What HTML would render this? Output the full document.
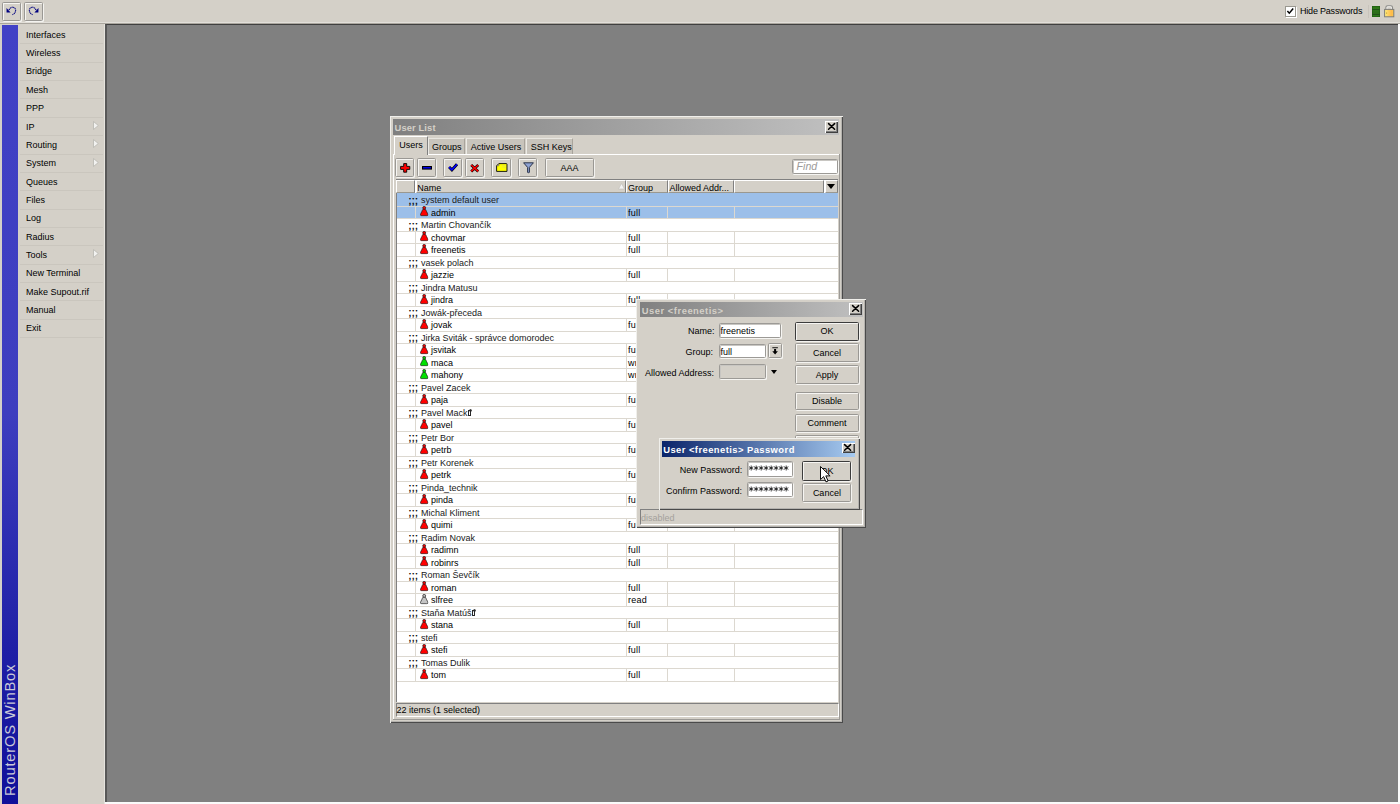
<!DOCTYPE html><html><head><meta charset="utf-8"><style>
*{margin:0;padding:0;box-sizing:border-box}
html,body{width:1400px;height:804px;overflow:hidden;background:#d4d0c8;font-family:"Liberation Sans",sans-serif;font-size:9px;color:#000}
.a{position:absolute}
.t{position:absolute;white-space:pre;line-height:1}
.btn{position:absolute;border:1px solid #9a9894;border-radius:1.5px;box-shadow:inset 1px 1px 0 #f6f5f2,1px 1px 0 #f4f3f0;background:#d4d0c8}
.bdef{border-color:#3c3c3c}
.cb{position:absolute;background:#d4d0c8;box-shadow:inset 1px 1px 0 #fff,inset -1px -1px 0 #404040,inset -2px -2px 0 #808080}
.inp{position:absolute;background:#fff;border:1px solid #9c9a96;border-radius:1.5px;box-shadow:1px 1px 0 #f6f5f2,inset 1px 1px 0 #c8c6c2}
.arr{position:absolute;width:0;height:0;border-left:5px solid #f4f4f4;border-top:4.5px solid transparent;border-bottom:4.5px solid transparent}
.win{position:absolute;background:#d4d0c8;box-shadow:inset 1px 1px 0 #f0efeb,inset -1px -1px 0 #4a4a4a,inset -2px -2px 0 #b4b2ae}
svg{position:absolute;overflow:visible}
.tofu{display:inline-block;width:3.2px;height:5.4px;border:0.9px solid #282828;margin-left:0.6px;vertical-align:0px;position:relative}.tofu:before{content:'';position:absolute;left:0px;top:-2.6px;width:1.3px;height:1.3px;border:0.7px solid #282828;border-radius:50%}
</style></head><body>
<div class="a" style="left:0;top:22px;width:1400px;height:1px;background:#e2dfd9"></div>
<div class="a" style="left:0;top:23px;width:1400px;height:1px;background:#aaa69e"></div>
<div class="btn" style="left:2px;top:2px;width:19px;height:19px"></div>
<div class="btn" style="left:23.5px;top:2px;width:19px;height:19px"></div>
<svg style="left:2px;top:2px" width="19" height="19" viewBox="0 0 19 19"><path d="M4.5 6.1L4.6 10.6L8.6 10.6Z" fill="#000080"/><path d="M6.9 7.9C8.2 5.9 9.8 5.1 11 5.2C12.6 5.4 13.7 6.8 13.6 8.8C13.5 10.4 12.2 11.9 10.4 12.6" fill="none" stroke="#000080" stroke-width="1.15" stroke-dasharray="1.2 0.55"/></svg>
<svg style="left:23.5px;top:2px" width="19" height="19" viewBox="0 0 19 19"><path d="M14.5 6.1L14.4 10.6L10.4 10.6Z" fill="#000080"/><path d="M12.1 7.9C10.8 5.9 9.2 5.1 8 5.2C6.4 5.4 5.3 6.8 5.4 8.8C5.5 10.4 6.8 11.9 8.6 12.6" fill="none" stroke="#000080" stroke-width="1.15" stroke-dasharray="1.2 0.55"/></svg>
<div class="a" style="left:2px;top:25px;width:16px;height:779px;background:linear-gradient(#4141c6 0%,#3d3dbf 50%,#1f1fa6 80%,#10109a 100%)"></div>
<div class="t" style="left:3.3px;top:795.5px;transform-origin:0 0;transform:rotate(-90deg);font-size:14.8px;letter-spacing:0.75px;color:#c8c8d8">RouterOS WinBox</div>
<div class="a" style="left:104px;top:24px;width:1px;height:780px;background:#e6e4de"></div>
<div class="t" style="left:26px;top:30.70px">Interfaces</div>
<div class="a" style="left:20px;top:43.36px;width:83px;height:1px;background:#cac6be"></div>
<div class="t" style="left:26px;top:49.06px">Wireless</div>
<div class="a" style="left:20px;top:61.72px;width:83px;height:1px;background:#cac6be"></div>
<div class="t" style="left:26px;top:67.42px">Bridge</div>
<div class="a" style="left:20px;top:80.08px;width:83px;height:1px;background:#cac6be"></div>
<div class="t" style="left:26px;top:85.78px">Mesh</div>
<div class="a" style="left:20px;top:98.44px;width:83px;height:1px;background:#cac6be"></div>
<div class="t" style="left:26px;top:104.14px">PPP</div>
<div class="a" style="left:20px;top:116.80px;width:83px;height:1px;background:#cac6be"></div>
<div class="t" style="left:26px;top:122.50px">IP</div>
<div class="a" style="left:20px;top:135.16px;width:83px;height:1px;background:#cac6be"></div>
<svg style="left:92.8px;top:120.89999999999999px" width="6" height="9" viewBox="0 0 6 9"><path d="M0.5 0.5L5.3 4.5L0.5 8.5Z" fill="#f2f2f0" stroke="#b8b6b0" stroke-width="0.8"/></svg>
<div class="t" style="left:26px;top:140.86px">Routing</div>
<div class="a" style="left:20px;top:153.52px;width:83px;height:1px;background:#cac6be"></div>
<svg style="left:92.8px;top:139.26px" width="6" height="9" viewBox="0 0 6 9"><path d="M0.5 0.5L5.3 4.5L0.5 8.5Z" fill="#f2f2f0" stroke="#b8b6b0" stroke-width="0.8"/></svg>
<div class="t" style="left:26px;top:159.22px">System</div>
<div class="a" style="left:20px;top:171.88px;width:83px;height:1px;background:#cac6be"></div>
<svg style="left:92.8px;top:157.61999999999998px" width="6" height="9" viewBox="0 0 6 9"><path d="M0.5 0.5L5.3 4.5L0.5 8.5Z" fill="#f2f2f0" stroke="#b8b6b0" stroke-width="0.8"/></svg>
<div class="t" style="left:26px;top:177.58px">Queues</div>
<div class="a" style="left:20px;top:190.24px;width:83px;height:1px;background:#cac6be"></div>
<div class="t" style="left:26px;top:195.94px">Files</div>
<div class="a" style="left:20px;top:208.60px;width:83px;height:1px;background:#cac6be"></div>
<div class="t" style="left:26px;top:214.30px">Log</div>
<div class="a" style="left:20px;top:226.96px;width:83px;height:1px;background:#cac6be"></div>
<div class="t" style="left:26px;top:232.66px">Radius</div>
<div class="a" style="left:20px;top:245.32px;width:83px;height:1px;background:#cac6be"></div>
<div class="t" style="left:26px;top:251.02px">Tools</div>
<div class="a" style="left:20px;top:263.68px;width:83px;height:1px;background:#cac6be"></div>
<svg style="left:92.8px;top:249.42px" width="6" height="9" viewBox="0 0 6 9"><path d="M0.5 0.5L5.3 4.5L0.5 8.5Z" fill="#f2f2f0" stroke="#b8b6b0" stroke-width="0.8"/></svg>
<div class="t" style="left:26px;top:269.38px">New Terminal</div>
<div class="a" style="left:20px;top:282.04px;width:83px;height:1px;background:#cac6be"></div>
<div class="t" style="left:26px;top:287.74px">Make Supout.rif</div>
<div class="a" style="left:20px;top:300.40px;width:83px;height:1px;background:#cac6be"></div>
<div class="t" style="left:26px;top:306.10px">Manual</div>
<div class="a" style="left:20px;top:318.76px;width:83px;height:1px;background:#cac6be"></div>
<div class="t" style="left:26px;top:324.46px">Exit</div>
<div class="a" style="left:20px;top:337.12px;width:83px;height:1px;background:#cac6be"></div>
<div class="a" style="left:105px;top:24px;width:1293px;height:778px;background:#808080;border-top:1px solid #404040;border-left:2px solid #585858"></div>
<div class="a" style="left:105px;top:802px;width:1295px;height:2px;background:#fafafa"></div>
<div class="a" style="left:1398px;top:24px;width:2px;height:780px;background:#fafafa"></div>
<div class="a" style="left:1285px;top:6px;width:10.5px;height:10.5px;background:#fff;border:1px solid #9a9890;box-shadow:1px 1px 0 #fff"></div>
<svg style="left:1285px;top:6px" width="10.5" height="10.5" viewBox="0 0 10.5 10.5"><path d="M2.4 5L4.3 7.2L8.2 2.6" fill="none" stroke="#000" stroke-width="1.5"/></svg>
<div class="t" style="left:1300px;top:7.4px;letter-spacing:-0.2px">Hide Passwords</div>
<div class="a" style="left:1368px;top:5px;width:1px;height:13px;background:#c8c4bc"></div>
<div class="a" style="left:1371.5px;top:6.1px;width:8.6px;height:10.8px;background:linear-gradient(#2c7016 0,#2f7a18 2.8px,#22501a 2.8px,#22501a 3.9px,#2e7418 3.9px,#2c6c18 7.9px,#22501a 7.9px,#22501a 9px,#2e7818 9px);box-shadow:inset 0 0 0 0.6px #1d5a10"></div>
<svg style="left:1384px;top:4.8px" width="10.4" height="12.4" viewBox="0 0 10.4 12.4"><path d="M1.9 4.6V2.3Q1.9 0.7 3.5 0.7H6.9Q8.5 0.7 8.5 2.3V4.6" fill="none" stroke="#8c8c8a" stroke-width="1.1"/><path d="M3 4.4V2.6Q3 1.8 3.8 1.8H6.6Q7.4 1.8 7.4 2.6V4.4" fill="none" stroke="#f4f4f2" stroke-width="0.8"/><rect x="0.6" y="4.4" width="9.2" height="7.4" fill="url(#lockg)" stroke="#7c7c7a" stroke-width="1"/><circle cx="2.6" cy="8" r="0.6" fill="#b09020"/><defs><linearGradient id="lockg"><stop offset="0" stop-color="#fff080"/><stop offset="0.4" stop-color="#ffd060"/><stop offset="0.8" stop-color="#ffb848"/><stop offset="1" stop-color="#ffd850"/></linearGradient></defs></svg>
<div class="win" style="left:390px;top:116px;width:452.5px;height:606.5px"></div>
<div class="a" style="left:393.3px;top:119px;width:446.2px;height:15.7px;background:linear-gradient(90deg,#808080,#c0c0c0)"></div>
<div class="t" style="left:394.6px;top:122.8px;font-weight:bold;font-size:9.4px;letter-spacing:0.1px;color:#d4d0c8">User List</div>
<div class="cb" style="left:825px;top:121px;width:13px;height:11.5px"></div>
<svg style="left:827.5px;top:123.05px" width="7.2" height="6.8" viewBox="0 0 7.2 6.8"><path d="M0.6 0.6L6.6 6.2M6.6 0.6L0.6 6.2" stroke="#000" stroke-width="1.55" stroke-linecap="round"/></svg>
<div class="a" style="left:839.3px;top:154px;width:1px;height:566px;background:#9c9a96"></div>
<div class="a" style="left:393px;top:719.2px;width:447px;height:1px;background:#9c9a96"></div>
<div class="a" style="left:393px;top:154px;width:1px;height:565px;background:#fff"></div>
<div class="a" style="left:393px;top:153.5px;width:446px;height:1px;background:#fff"></div>
<div class="a" style="left:393.6px;top:136px;width:34.69999999999999px;height:18.5px;background:#d4d0c8;border-top:1px solid #fff;border-left:1px solid #fff;border-right:1px solid #808080"></div>
<div class="t" style="left:399.3px;top:141px">Users</div>
<div class="a" style="left:428.3px;top:137.7px;width:37.099999999999966px;height:16px;background:#c8c4bc;border-top:1px solid #e8e6e0;border-left:1px solid #ecebe6;border-right:1px solid #a8a49c"></div>
<div class="t" style="left:432px;top:142.5px">Groups</div>
<div class="a" style="left:466.4px;top:137.7px;width:59.0px;height:16px;background:#c8c4bc;border-top:1px solid #e8e6e0;border-left:1px solid #ecebe6;border-right:1px solid #a8a49c"></div>
<div class="t" style="left:470.7px;top:142.5px">Active Users</div>
<div class="a" style="left:526.4px;top:137.7px;width:46.5px;height:16px;background:#c8c4bc;border-top:1px solid #e8e6e0;border-left:1px solid #ecebe6;border-right:1px solid #a8a49c"></div>
<div class="t" style="left:530.7px;top:142.5px">SSH Keys</div>
<div class="btn" style="left:395.4px;top:157.7px;width:18.2px;height:19px"></div>
<div class="btn" style="left:416.9px;top:157.7px;width:18.8px;height:19px"></div>
<div class="btn" style="left:443.1px;top:157.7px;width:19.0px;height:19px"></div>
<div class="btn" style="left:465px;top:157.7px;width:18.9px;height:19px"></div>
<div class="btn" style="left:491.4px;top:157.7px;width:19.3px;height:19px"></div>
<div class="btn" style="left:518.3px;top:157.7px;width:18.8px;height:19px"></div>
<div class="btn" style="left:545px;top:157.7px;width:49.0px;height:19px"></div>
<svg style="left:399.8px;top:162.5px" width="10.4" height="9.8" viewBox="0 0 10.4 9.8"><path d="M3.7 0.6H6.7V3.4H9.8V6.4H6.7V9.2H3.7V6.4H0.6V3.4H3.7Z" fill="#ff0000" stroke="#000" stroke-width="0.9" stroke-linejoin="miter"/></svg>
<svg style="left:421.8px;top:165.5px" width="10" height="3.6" viewBox="0 0 10 3.6"><rect x="0.55" y="0.55" width="8.9" height="2.5" fill="#0000ff" stroke="#000" stroke-width="1.1"/></svg>
<svg style="left:448.3px;top:163.4px" width="10" height="8.4" viewBox="0 0 10 8.4"><path d="M1.1 4.1L3.9 6.9L9.0 1.2" fill="none" stroke="#000" stroke-width="2.9" stroke-linejoin="miter"/><path d="M1.1 4.1L3.9 6.9L9.0 1.2" fill="none" stroke="#0000ff" stroke-width="1.6" stroke-linejoin="miter"/></svg>
<svg style="left:469.8px;top:163.9px" width="9.4" height="8.4" viewBox="0 0 9.4 8.4"><path d="M1.2 1.0L8.2 7.4M8.2 1.0L1.2 7.4" stroke="#000" stroke-width="2.7"/><path d="M1.2 1.0L8.2 7.4M8.2 1.0L1.2 7.4" stroke="#ff0000" stroke-width="1.5"/></svg>
<svg style="left:495.5px;top:162.7px" width="11.6" height="9" viewBox="0 0 11.6 9"><path d="M2.8 0.6H10.4Q11 0.6 11 1.2V8.4H0.6V2.8Z" fill="#ffff00" stroke="#101010" stroke-width="0.95" stroke-linejoin="round"/><path d="M0.9 2.8H2.8V0.9Z" fill="#e8e8d0" stroke="#404040" stroke-width="0.5"/><path d="M6.2 2.6H9.6M6.2 4.2H9.6" stroke="#d8d860" stroke-width="0.6"/></svg>
<svg style="left:522.7px;top:162px" width="11" height="11.4" viewBox="0 0 11 11.4"><path d="M0.6 0.8H10.4L6.4 5.4V10.4Q5.5 11 4.6 10.4V5.4Z" fill="#8ea2d2" stroke="#2a3248" stroke-width="1" stroke-linejoin="round"/></svg>
<div class="t" style="left:560.5px;top:163.8px">AAA</div>
<div class="inp" style="left:791.8px;top:159.3px;width:46px;height:14.5px"></div>
<div class="t" style="left:796.6px;top:161px;font-style:italic;color:#9c9a98;font-size:10.6px">Find</div>
<div class="a" style="left:395.5px;top:179.4px;width:442.7px;height:522.4px;background:#fff;border-top:1px solid #808080;border-left:1px solid #808080"></div>
<div class="a" style="left:395.9px;top:180.2px;width:19.6px;height:13.2px;background:#d4d0c8;border-top:1px solid #fff;border-left:1px solid #fff;border-right:1px solid #808080;border-bottom:1px solid #9a9890"></div>
<div class="a" style="left:415.5px;top:180.2px;width:210.7px;height:13.2px;background:#d4d0c8;border-top:1px solid #fff;border-left:1px solid #fff;border-right:1px solid #808080;border-bottom:1px solid #9a9890"></div>
<div class="t" style="left:417.3px;top:184.1px">Name</div>
<div class="a" style="left:626.2px;top:180.2px;width:41.4px;height:13.2px;background:#d4d0c8;border-top:1px solid #fff;border-left:1px solid #fff;border-right:1px solid #808080;border-bottom:1px solid #9a9890"></div>
<div class="t" style="left:628.0px;top:184.1px">Group</div>
<div class="a" style="left:667.6px;top:180.2px;width:66.8px;height:13.2px;background:#d4d0c8;border-top:1px solid #fff;border-left:1px solid #fff;border-right:1px solid #808080;border-bottom:1px solid #9a9890"></div>
<div class="t" style="left:669.4px;top:184.1px">Allowed Addr...</div>
<div class="a" style="left:734.4px;top:180.2px;width:90.1px;height:13.2px;background:#d4d0c8;border-top:1px solid #fff;border-left:1px solid #fff;border-right:1px solid #808080;border-bottom:1px solid #9a9890"></div>
<div class="a" style="left:824.5px;top:180.2px;width:13.7px;height:13.2px;background:#d4d0c8;border-top:1px solid #fff;border-left:1px solid #fff;border-right:1px solid #808080;border-bottom:1px solid #9a9890"></div>
<svg style="left:617.5px;top:182.5px" width="7" height="6.5" viewBox="0 0 7 6.5"><path d="M3.5 0.5L6.5 6H0.5Z" fill="#f4f4f4" stroke="#c0beb8" stroke-width="0.6"/></svg>
<div class="a" style="left:826.8px;top:184.3px;width:0;height:0;border-left:4.5px solid transparent;border-right:4.5px solid transparent;border-top:5px solid #000"></div>
<svg width="0" height="0" style="position:absolute"><defs><symbol id="usr" viewBox="0 0 8.4 10.4"><path d="M4.2 2.7C2.9 2.7 2.4 4.2 1.8 5.6C1.2 7.1 0.45 7.7 0.45 8.7Q0.45 9.75 1.7 9.75H6.7Q7.95 9.75 7.95 8.7C7.95 7.7 7.2 7.1 6.6 5.6C6.0 4.2 5.5 2.7 4.2 2.7Z" fill="currentColor" stroke="#181818" stroke-width="0.7"/><circle cx="4.2" cy="1.85" r="1.45" fill="currentColor" stroke="#181818" stroke-width="0.7"/></symbol></defs></svg>
<div class="a" style="left:396.5px;top:193.40px;width:441.7px;height:12.5px;background:#9cbfe9"></div>
<div class="a" style="left:396.5px;top:205.90px;width:441.7px;height:12.5px;background:#9cbfe9"></div>
<div class="a" style="left:396.5px;top:205.75px;width:441.7px;height:1px;background:#dcd8d0"></div>
<div class="t" style="left:408.6px;top:195.90px;color:#000;letter-spacing:0.3px;font-size:10.4px;font-weight:normal;-webkit-text-stroke:0.25px #000">;;;</div>
<div class="t" style="left:421px;top:196.20px;color:#202020">system default user</div>
<div class="a" style="left:396.5px;top:218.25px;width:441.7px;height:1px;background:#dcd8d0"></div>
<div class="a" style="left:415.0px;top:205.90px;width:1px;height:12.5px;background:#dcd8d0"></div>
<div class="a" style="left:625.7px;top:205.90px;width:1px;height:12.5px;background:#dcd8d0"></div>
<div class="a" style="left:667.1px;top:205.90px;width:1px;height:12.5px;background:#dcd8d0"></div>
<div class="a" style="left:733.9px;top:205.90px;width:1px;height:12.5px;background:#dcd8d0"></div>
<svg style="left:420px;top:206.00px;color:#ff0000" width="8.4" height="10.4"><use href="#usr"/></svg>
<div class="t" style="left:431px;top:208.70px">admin</div>
<div class="t" style="left:627.9px;top:208.70px;letter-spacing:0.3px">full</div>
<div class="a" style="left:396.5px;top:230.75px;width:441.7px;height:1px;background:#dcd8d0"></div>
<div class="t" style="left:408.6px;top:220.90px;color:#000;letter-spacing:0.3px;font-size:10.4px;font-weight:normal;-webkit-text-stroke:0.25px #000">;;;</div>
<div class="t" style="left:421px;top:221.20px;color:#202020">Martin Chovančík</div>
<div class="a" style="left:396.5px;top:243.25px;width:441.7px;height:1px;background:#dcd8d0"></div>
<div class="a" style="left:415.0px;top:230.90px;width:1px;height:12.5px;background:#dcd8d0"></div>
<div class="a" style="left:625.7px;top:230.90px;width:1px;height:12.5px;background:#dcd8d0"></div>
<div class="a" style="left:667.1px;top:230.90px;width:1px;height:12.5px;background:#dcd8d0"></div>
<div class="a" style="left:733.9px;top:230.90px;width:1px;height:12.5px;background:#dcd8d0"></div>
<svg style="left:420px;top:231.00px;color:#ff0000" width="8.4" height="10.4"><use href="#usr"/></svg>
<div class="t" style="left:431px;top:233.70px">chovmar</div>
<div class="t" style="left:627.9px;top:233.70px;letter-spacing:0.3px">full</div>
<div class="a" style="left:396.5px;top:255.75px;width:441.7px;height:1px;background:#dcd8d0"></div>
<div class="a" style="left:415.0px;top:243.40px;width:1px;height:12.5px;background:#dcd8d0"></div>
<div class="a" style="left:625.7px;top:243.40px;width:1px;height:12.5px;background:#dcd8d0"></div>
<div class="a" style="left:667.1px;top:243.40px;width:1px;height:12.5px;background:#dcd8d0"></div>
<div class="a" style="left:733.9px;top:243.40px;width:1px;height:12.5px;background:#dcd8d0"></div>
<svg style="left:420px;top:243.50px;color:#ff0000" width="8.4" height="10.4"><use href="#usr"/></svg>
<div class="t" style="left:431px;top:246.20px">freenetis</div>
<div class="t" style="left:627.9px;top:246.20px;letter-spacing:0.3px">full</div>
<div class="a" style="left:396.5px;top:268.25px;width:441.7px;height:1px;background:#dcd8d0"></div>
<div class="t" style="left:408.6px;top:258.40px;color:#000;letter-spacing:0.3px;font-size:10.4px;font-weight:normal;-webkit-text-stroke:0.25px #000">;;;</div>
<div class="t" style="left:421px;top:258.70px;color:#202020">vasek polach</div>
<div class="a" style="left:396.5px;top:280.75px;width:441.7px;height:1px;background:#dcd8d0"></div>
<div class="a" style="left:415.0px;top:268.40px;width:1px;height:12.5px;background:#dcd8d0"></div>
<div class="a" style="left:625.7px;top:268.40px;width:1px;height:12.5px;background:#dcd8d0"></div>
<div class="a" style="left:667.1px;top:268.40px;width:1px;height:12.5px;background:#dcd8d0"></div>
<div class="a" style="left:733.9px;top:268.40px;width:1px;height:12.5px;background:#dcd8d0"></div>
<svg style="left:420px;top:268.50px;color:#ff0000" width="8.4" height="10.4"><use href="#usr"/></svg>
<div class="t" style="left:431px;top:271.20px">jazzie</div>
<div class="t" style="left:627.9px;top:271.20px;letter-spacing:0.3px">full</div>
<div class="a" style="left:396.5px;top:293.25px;width:441.7px;height:1px;background:#dcd8d0"></div>
<div class="t" style="left:408.6px;top:283.40px;color:#000;letter-spacing:0.3px;font-size:10.4px;font-weight:normal;-webkit-text-stroke:0.25px #000">;;;</div>
<div class="t" style="left:421px;top:283.70px;color:#202020">Jindra Matusu</div>
<div class="a" style="left:396.5px;top:305.75px;width:441.7px;height:1px;background:#dcd8d0"></div>
<div class="a" style="left:415.0px;top:293.40px;width:1px;height:12.5px;background:#dcd8d0"></div>
<div class="a" style="left:625.7px;top:293.40px;width:1px;height:12.5px;background:#dcd8d0"></div>
<div class="a" style="left:667.1px;top:293.40px;width:1px;height:12.5px;background:#dcd8d0"></div>
<div class="a" style="left:733.9px;top:293.40px;width:1px;height:12.5px;background:#dcd8d0"></div>
<svg style="left:420px;top:293.50px;color:#ff0000" width="8.4" height="10.4"><use href="#usr"/></svg>
<div class="t" style="left:431px;top:296.20px">jindra</div>
<div class="t" style="left:627.9px;top:296.20px;letter-spacing:0.3px">full</div>
<div class="a" style="left:396.5px;top:318.25px;width:441.7px;height:1px;background:#dcd8d0"></div>
<div class="t" style="left:408.6px;top:308.40px;color:#000;letter-spacing:0.3px;font-size:10.4px;font-weight:normal;-webkit-text-stroke:0.25px #000">;;;</div>
<div class="t" style="left:421px;top:308.70px;color:#202020">Jowák-přeceda</div>
<div class="a" style="left:396.5px;top:330.75px;width:441.7px;height:1px;background:#dcd8d0"></div>
<div class="a" style="left:415.0px;top:318.40px;width:1px;height:12.5px;background:#dcd8d0"></div>
<div class="a" style="left:625.7px;top:318.40px;width:1px;height:12.5px;background:#dcd8d0"></div>
<div class="a" style="left:667.1px;top:318.40px;width:1px;height:12.5px;background:#dcd8d0"></div>
<div class="a" style="left:733.9px;top:318.40px;width:1px;height:12.5px;background:#dcd8d0"></div>
<svg style="left:420px;top:318.50px;color:#ff0000" width="8.4" height="10.4"><use href="#usr"/></svg>
<div class="t" style="left:431px;top:321.20px">jovak</div>
<div class="t" style="left:627.9px;top:321.20px;letter-spacing:0.3px">full</div>
<div class="a" style="left:396.5px;top:343.25px;width:441.7px;height:1px;background:#dcd8d0"></div>
<div class="t" style="left:408.6px;top:333.40px;color:#000;letter-spacing:0.3px;font-size:10.4px;font-weight:normal;-webkit-text-stroke:0.25px #000">;;;</div>
<div class="t" style="left:421px;top:333.70px;color:#202020">Jirka Sviták - správce domorodec</div>
<div class="a" style="left:396.5px;top:355.75px;width:441.7px;height:1px;background:#dcd8d0"></div>
<div class="a" style="left:415.0px;top:343.40px;width:1px;height:12.5px;background:#dcd8d0"></div>
<div class="a" style="left:625.7px;top:343.40px;width:1px;height:12.5px;background:#dcd8d0"></div>
<div class="a" style="left:667.1px;top:343.40px;width:1px;height:12.5px;background:#dcd8d0"></div>
<div class="a" style="left:733.9px;top:343.40px;width:1px;height:12.5px;background:#dcd8d0"></div>
<svg style="left:420px;top:343.50px;color:#ff0000" width="8.4" height="10.4"><use href="#usr"/></svg>
<div class="t" style="left:431px;top:346.20px">jsvitak</div>
<div class="t" style="left:627.9px;top:346.20px;letter-spacing:0.3px">full</div>
<div class="a" style="left:396.5px;top:368.25px;width:441.7px;height:1px;background:#dcd8d0"></div>
<div class="a" style="left:415.0px;top:355.90px;width:1px;height:12.5px;background:#dcd8d0"></div>
<div class="a" style="left:625.7px;top:355.90px;width:1px;height:12.5px;background:#dcd8d0"></div>
<div class="a" style="left:667.1px;top:355.90px;width:1px;height:12.5px;background:#dcd8d0"></div>
<div class="a" style="left:733.9px;top:355.90px;width:1px;height:12.5px;background:#dcd8d0"></div>
<svg style="left:420px;top:356.00px;color:#00e000" width="8.4" height="10.4"><use href="#usr"/></svg>
<div class="t" style="left:431px;top:358.70px">maca</div>
<div class="t" style="left:627.9px;top:358.70px;letter-spacing:0.3px">write</div>
<div class="a" style="left:396.5px;top:380.75px;width:441.7px;height:1px;background:#dcd8d0"></div>
<div class="a" style="left:415.0px;top:368.40px;width:1px;height:12.5px;background:#dcd8d0"></div>
<div class="a" style="left:625.7px;top:368.40px;width:1px;height:12.5px;background:#dcd8d0"></div>
<div class="a" style="left:667.1px;top:368.40px;width:1px;height:12.5px;background:#dcd8d0"></div>
<div class="a" style="left:733.9px;top:368.40px;width:1px;height:12.5px;background:#dcd8d0"></div>
<svg style="left:420px;top:368.50px;color:#00e000" width="8.4" height="10.4"><use href="#usr"/></svg>
<div class="t" style="left:431px;top:371.20px">mahony</div>
<div class="t" style="left:627.9px;top:371.20px;letter-spacing:0.3px">write</div>
<div class="a" style="left:396.5px;top:393.25px;width:441.7px;height:1px;background:#dcd8d0"></div>
<div class="t" style="left:408.6px;top:383.40px;color:#000;letter-spacing:0.3px;font-size:10.4px;font-weight:normal;-webkit-text-stroke:0.25px #000">;;;</div>
<div class="t" style="left:421px;top:383.70px;color:#202020">Pavel Zacek</div>
<div class="a" style="left:396.5px;top:405.75px;width:441.7px;height:1px;background:#dcd8d0"></div>
<div class="a" style="left:415.0px;top:393.40px;width:1px;height:12.5px;background:#dcd8d0"></div>
<div class="a" style="left:625.7px;top:393.40px;width:1px;height:12.5px;background:#dcd8d0"></div>
<div class="a" style="left:667.1px;top:393.40px;width:1px;height:12.5px;background:#dcd8d0"></div>
<div class="a" style="left:733.9px;top:393.40px;width:1px;height:12.5px;background:#dcd8d0"></div>
<svg style="left:420px;top:393.50px;color:#ff0000" width="8.4" height="10.4"><use href="#usr"/></svg>
<div class="t" style="left:431px;top:396.20px">paja</div>
<div class="t" style="left:627.9px;top:396.20px;letter-spacing:0.3px">full</div>
<div class="a" style="left:396.5px;top:418.25px;width:441.7px;height:1px;background:#dcd8d0"></div>
<div class="t" style="left:408.6px;top:408.40px;color:#000;letter-spacing:0.3px;font-size:10.4px;font-weight:normal;-webkit-text-stroke:0.25px #000">;;;</div>
<div class="t" style="left:421px;top:408.70px;color:#202020">Pavel Mack<span class="tofu"></span></div>
<div class="a" style="left:396.5px;top:430.75px;width:441.7px;height:1px;background:#dcd8d0"></div>
<div class="a" style="left:415.0px;top:418.40px;width:1px;height:12.5px;background:#dcd8d0"></div>
<div class="a" style="left:625.7px;top:418.40px;width:1px;height:12.5px;background:#dcd8d0"></div>
<div class="a" style="left:667.1px;top:418.40px;width:1px;height:12.5px;background:#dcd8d0"></div>
<div class="a" style="left:733.9px;top:418.40px;width:1px;height:12.5px;background:#dcd8d0"></div>
<svg style="left:420px;top:418.50px;color:#ff0000" width="8.4" height="10.4"><use href="#usr"/></svg>
<div class="t" style="left:431px;top:421.20px">pavel</div>
<div class="t" style="left:627.9px;top:421.20px;letter-spacing:0.3px">full</div>
<div class="a" style="left:396.5px;top:443.25px;width:441.7px;height:1px;background:#dcd8d0"></div>
<div class="t" style="left:408.6px;top:433.40px;color:#000;letter-spacing:0.3px;font-size:10.4px;font-weight:normal;-webkit-text-stroke:0.25px #000">;;;</div>
<div class="t" style="left:421px;top:433.70px;color:#202020">Petr Bor</div>
<div class="a" style="left:396.5px;top:455.75px;width:441.7px;height:1px;background:#dcd8d0"></div>
<div class="a" style="left:415.0px;top:443.40px;width:1px;height:12.5px;background:#dcd8d0"></div>
<div class="a" style="left:625.7px;top:443.40px;width:1px;height:12.5px;background:#dcd8d0"></div>
<div class="a" style="left:667.1px;top:443.40px;width:1px;height:12.5px;background:#dcd8d0"></div>
<div class="a" style="left:733.9px;top:443.40px;width:1px;height:12.5px;background:#dcd8d0"></div>
<svg style="left:420px;top:443.50px;color:#ff0000" width="8.4" height="10.4"><use href="#usr"/></svg>
<div class="t" style="left:431px;top:446.20px">petrb</div>
<div class="t" style="left:627.9px;top:446.20px;letter-spacing:0.3px">full</div>
<div class="a" style="left:396.5px;top:468.25px;width:441.7px;height:1px;background:#dcd8d0"></div>
<div class="t" style="left:408.6px;top:458.40px;color:#000;letter-spacing:0.3px;font-size:10.4px;font-weight:normal;-webkit-text-stroke:0.25px #000">;;;</div>
<div class="t" style="left:421px;top:458.70px;color:#202020">Petr Korenek</div>
<div class="a" style="left:396.5px;top:480.75px;width:441.7px;height:1px;background:#dcd8d0"></div>
<div class="a" style="left:415.0px;top:468.40px;width:1px;height:12.5px;background:#dcd8d0"></div>
<div class="a" style="left:625.7px;top:468.40px;width:1px;height:12.5px;background:#dcd8d0"></div>
<div class="a" style="left:667.1px;top:468.40px;width:1px;height:12.5px;background:#dcd8d0"></div>
<div class="a" style="left:733.9px;top:468.40px;width:1px;height:12.5px;background:#dcd8d0"></div>
<svg style="left:420px;top:468.50px;color:#ff0000" width="8.4" height="10.4"><use href="#usr"/></svg>
<div class="t" style="left:431px;top:471.20px">petrk</div>
<div class="t" style="left:627.9px;top:471.20px;letter-spacing:0.3px">full</div>
<div class="a" style="left:396.5px;top:493.25px;width:441.7px;height:1px;background:#dcd8d0"></div>
<div class="t" style="left:408.6px;top:483.40px;color:#000;letter-spacing:0.3px;font-size:10.4px;font-weight:normal;-webkit-text-stroke:0.25px #000">;;;</div>
<div class="t" style="left:421px;top:483.70px;color:#202020">Pinda_technik</div>
<div class="a" style="left:396.5px;top:505.75px;width:441.7px;height:1px;background:#dcd8d0"></div>
<div class="a" style="left:415.0px;top:493.40px;width:1px;height:12.5px;background:#dcd8d0"></div>
<div class="a" style="left:625.7px;top:493.40px;width:1px;height:12.5px;background:#dcd8d0"></div>
<div class="a" style="left:667.1px;top:493.40px;width:1px;height:12.5px;background:#dcd8d0"></div>
<div class="a" style="left:733.9px;top:493.40px;width:1px;height:12.5px;background:#dcd8d0"></div>
<svg style="left:420px;top:493.50px;color:#ff0000" width="8.4" height="10.4"><use href="#usr"/></svg>
<div class="t" style="left:431px;top:496.20px">pinda</div>
<div class="t" style="left:627.9px;top:496.20px;letter-spacing:0.3px">full</div>
<div class="a" style="left:396.5px;top:518.25px;width:441.7px;height:1px;background:#dcd8d0"></div>
<div class="t" style="left:408.6px;top:508.40px;color:#000;letter-spacing:0.3px;font-size:10.4px;font-weight:normal;-webkit-text-stroke:0.25px #000">;;;</div>
<div class="t" style="left:421px;top:508.70px;color:#202020">Michal Kliment</div>
<div class="a" style="left:396.5px;top:530.75px;width:441.7px;height:1px;background:#dcd8d0"></div>
<div class="a" style="left:415.0px;top:518.40px;width:1px;height:12.5px;background:#dcd8d0"></div>
<div class="a" style="left:625.7px;top:518.40px;width:1px;height:12.5px;background:#dcd8d0"></div>
<div class="a" style="left:667.1px;top:518.40px;width:1px;height:12.5px;background:#dcd8d0"></div>
<div class="a" style="left:733.9px;top:518.40px;width:1px;height:12.5px;background:#dcd8d0"></div>
<svg style="left:420px;top:518.50px;color:#ff0000" width="8.4" height="10.4"><use href="#usr"/></svg>
<div class="t" style="left:431px;top:521.20px">quimi</div>
<div class="t" style="left:627.9px;top:521.20px;letter-spacing:0.3px">full</div>
<div class="a" style="left:396.5px;top:543.25px;width:441.7px;height:1px;background:#dcd8d0"></div>
<div class="t" style="left:408.6px;top:533.40px;color:#000;letter-spacing:0.3px;font-size:10.4px;font-weight:normal;-webkit-text-stroke:0.25px #000">;;;</div>
<div class="t" style="left:421px;top:533.70px;color:#202020">Radim Novak</div>
<div class="a" style="left:396.5px;top:555.75px;width:441.7px;height:1px;background:#dcd8d0"></div>
<div class="a" style="left:415.0px;top:543.40px;width:1px;height:12.5px;background:#dcd8d0"></div>
<div class="a" style="left:625.7px;top:543.40px;width:1px;height:12.5px;background:#dcd8d0"></div>
<div class="a" style="left:667.1px;top:543.40px;width:1px;height:12.5px;background:#dcd8d0"></div>
<div class="a" style="left:733.9px;top:543.40px;width:1px;height:12.5px;background:#dcd8d0"></div>
<svg style="left:420px;top:543.50px;color:#ff0000" width="8.4" height="10.4"><use href="#usr"/></svg>
<div class="t" style="left:431px;top:546.20px">radimn</div>
<div class="t" style="left:627.9px;top:546.20px;letter-spacing:0.3px">full</div>
<div class="a" style="left:396.5px;top:568.25px;width:441.7px;height:1px;background:#dcd8d0"></div>
<div class="a" style="left:415.0px;top:555.90px;width:1px;height:12.5px;background:#dcd8d0"></div>
<div class="a" style="left:625.7px;top:555.90px;width:1px;height:12.5px;background:#dcd8d0"></div>
<div class="a" style="left:667.1px;top:555.90px;width:1px;height:12.5px;background:#dcd8d0"></div>
<div class="a" style="left:733.9px;top:555.90px;width:1px;height:12.5px;background:#dcd8d0"></div>
<svg style="left:420px;top:556.00px;color:#ff0000" width="8.4" height="10.4"><use href="#usr"/></svg>
<div class="t" style="left:431px;top:558.70px">robinrs</div>
<div class="t" style="left:627.9px;top:558.70px;letter-spacing:0.3px">full</div>
<div class="a" style="left:396.5px;top:580.75px;width:441.7px;height:1px;background:#dcd8d0"></div>
<div class="t" style="left:408.6px;top:570.90px;color:#000;letter-spacing:0.3px;font-size:10.4px;font-weight:normal;-webkit-text-stroke:0.25px #000">;;;</div>
<div class="t" style="left:421px;top:571.20px;color:#202020">Roman Ševčík</div>
<div class="a" style="left:396.5px;top:593.25px;width:441.7px;height:1px;background:#dcd8d0"></div>
<div class="a" style="left:415.0px;top:580.90px;width:1px;height:12.5px;background:#dcd8d0"></div>
<div class="a" style="left:625.7px;top:580.90px;width:1px;height:12.5px;background:#dcd8d0"></div>
<div class="a" style="left:667.1px;top:580.90px;width:1px;height:12.5px;background:#dcd8d0"></div>
<div class="a" style="left:733.9px;top:580.90px;width:1px;height:12.5px;background:#dcd8d0"></div>
<svg style="left:420px;top:581.00px;color:#ff0000" width="8.4" height="10.4"><use href="#usr"/></svg>
<div class="t" style="left:431px;top:583.70px">roman</div>
<div class="t" style="left:627.9px;top:583.70px;letter-spacing:0.3px">full</div>
<div class="a" style="left:396.5px;top:605.75px;width:441.7px;height:1px;background:#dcd8d0"></div>
<div class="a" style="left:415.0px;top:593.40px;width:1px;height:12.5px;background:#dcd8d0"></div>
<div class="a" style="left:625.7px;top:593.40px;width:1px;height:12.5px;background:#dcd8d0"></div>
<div class="a" style="left:667.1px;top:593.40px;width:1px;height:12.5px;background:#dcd8d0"></div>
<div class="a" style="left:733.9px;top:593.40px;width:1px;height:12.5px;background:#dcd8d0"></div>
<svg style="left:420px;top:593.50px;color:#c4c4c4" width="8.4" height="10.4"><use href="#usr"/></svg>
<div class="t" style="left:431px;top:596.20px">slfree</div>
<div class="t" style="left:627.9px;top:596.20px;letter-spacing:0.3px">read</div>
<div class="a" style="left:396.5px;top:618.25px;width:441.7px;height:1px;background:#dcd8d0"></div>
<div class="t" style="left:408.6px;top:608.40px;color:#000;letter-spacing:0.3px;font-size:10.4px;font-weight:normal;-webkit-text-stroke:0.25px #000">;;;</div>
<div class="t" style="left:421px;top:608.70px;color:#202020">Staňa Matúš<span class="tofu"></span></div>
<div class="a" style="left:396.5px;top:630.75px;width:441.7px;height:1px;background:#dcd8d0"></div>
<div class="a" style="left:415.0px;top:618.40px;width:1px;height:12.5px;background:#dcd8d0"></div>
<div class="a" style="left:625.7px;top:618.40px;width:1px;height:12.5px;background:#dcd8d0"></div>
<div class="a" style="left:667.1px;top:618.40px;width:1px;height:12.5px;background:#dcd8d0"></div>
<div class="a" style="left:733.9px;top:618.40px;width:1px;height:12.5px;background:#dcd8d0"></div>
<svg style="left:420px;top:618.50px;color:#ff0000" width="8.4" height="10.4"><use href="#usr"/></svg>
<div class="t" style="left:431px;top:621.20px">stana</div>
<div class="t" style="left:627.9px;top:621.20px;letter-spacing:0.3px">full</div>
<div class="a" style="left:396.5px;top:643.25px;width:441.7px;height:1px;background:#dcd8d0"></div>
<div class="t" style="left:408.6px;top:633.40px;color:#000;letter-spacing:0.3px;font-size:10.4px;font-weight:normal;-webkit-text-stroke:0.25px #000">;;;</div>
<div class="t" style="left:421px;top:633.70px;color:#202020">stefi</div>
<div class="a" style="left:396.5px;top:655.75px;width:441.7px;height:1px;background:#dcd8d0"></div>
<div class="a" style="left:415.0px;top:643.40px;width:1px;height:12.5px;background:#dcd8d0"></div>
<div class="a" style="left:625.7px;top:643.40px;width:1px;height:12.5px;background:#dcd8d0"></div>
<div class="a" style="left:667.1px;top:643.40px;width:1px;height:12.5px;background:#dcd8d0"></div>
<div class="a" style="left:733.9px;top:643.40px;width:1px;height:12.5px;background:#dcd8d0"></div>
<svg style="left:420px;top:643.50px;color:#ff0000" width="8.4" height="10.4"><use href="#usr"/></svg>
<div class="t" style="left:431px;top:646.20px">stefi</div>
<div class="t" style="left:627.9px;top:646.20px;letter-spacing:0.3px">full</div>
<div class="a" style="left:396.5px;top:668.25px;width:441.7px;height:1px;background:#dcd8d0"></div>
<div class="t" style="left:408.6px;top:658.40px;color:#000;letter-spacing:0.3px;font-size:10.4px;font-weight:normal;-webkit-text-stroke:0.25px #000">;;;</div>
<div class="t" style="left:421px;top:658.70px;color:#202020">Tomas Dulik</div>
<div class="a" style="left:396.5px;top:680.75px;width:441.7px;height:1px;background:#dcd8d0"></div>
<div class="a" style="left:415.0px;top:668.40px;width:1px;height:12.5px;background:#dcd8d0"></div>
<div class="a" style="left:625.7px;top:668.40px;width:1px;height:12.5px;background:#dcd8d0"></div>
<div class="a" style="left:667.1px;top:668.40px;width:1px;height:12.5px;background:#dcd8d0"></div>
<div class="a" style="left:733.9px;top:668.40px;width:1px;height:12.5px;background:#dcd8d0"></div>
<svg style="left:420px;top:668.50px;color:#ff0000" width="8.4" height="10.4"><use href="#usr"/></svg>
<div class="t" style="left:431px;top:671.20px">tom</div>
<div class="t" style="left:627.9px;top:671.20px;letter-spacing:0.3px">full</div>
<div class="a" style="left:395.5px;top:702.7px;width:443px;height:14px;background:#d4d0c8;border-top:1px solid #808080;border-left:1px solid #808080;border-right:1px solid #fff;border-bottom:1px solid #fff"></div>
<div class="t" style="left:396.5px;top:706.4px">22 items (1 selected)</div>
<div class="win" style="left:636.0px;top:299px;width:230px;height:229.2px"></div>
<div class="a" style="left:640px;top:301.9px;width:223px;height:15.2px;background:linear-gradient(90deg,#808080,#c0c0c0)"></div>
<div class="t" style="left:641.8px;top:305.5px;font-weight:bold;font-size:9.4px;letter-spacing:0.52px;color:#d4d0c8">User &lt;freenetis&gt;</div>
<div class="cb" style="left:849.3px;top:303.4px;width:13px;height:11.5px"></div>
<svg style="left:851.8px;top:305.45px" width="7.2" height="6.8" viewBox="0 0 7.2 6.8"><path d="M0.6 0.6L6.6 6.2M6.6 0.6L0.6 6.2" stroke="#000" stroke-width="1.55" stroke-linecap="round"/></svg>
<div class="t" style="left:688px;top:326.5px">Name:</div>
<div class="inp" style="left:719.2px;top:322.6px;width:62.3px;height:15px"></div>
<div class="t" style="left:720.5px;top:326.5px">freenetis</div>
<div class="t" style="left:685.5px;top:347.5px">Group:</div>
<div class="inp" style="left:719.2px;top:343.5px;width:47px;height:14.5px"></div>
<div class="t" style="left:720.5px;top:347.5px">full</div>
<div class="btn" style="left:767.8px;top:343.4px;width:13.9px;height:14.4px"></div>
<svg style="left:771.6px;top:346.6px" width="6.2" height="8" viewBox="0 0 6.2 8"><rect x="0.3" y="0.3" width="5.6" height="0.9" fill="#000"/><path d="M2.1 2H4.1V4.2H5.9L3.1 7.4L0.3 4.2H2.1Z" fill="#000"/></svg>
<div class="t" style="left:645px;top:368.5px">Allowed Address:</div>
<div class="inp" style="left:719.2px;top:364.4px;width:47px;height:14.6px;background:#d4d0c8"></div>
<div class="a" style="left:770.7px;top:370px;width:0;height:0;border-left:3.8px solid transparent;border-right:3.8px solid transparent;border-top:4.4px solid #000"></div>
<div class="btn bdef" style="left:795.2px;top:321.5px;width:63.6px;height:19.3px"></div>
<div class="t" style="left:795.2px;width:63.6px;text-align:center;top:327.3px">OK</div>
<div class="btn" style="left:795.2px;top:343.2px;width:63.6px;height:18.8px"></div>
<div class="t" style="left:795.2px;width:63.6px;text-align:center;top:348.8px">Cancel</div>
<div class="btn" style="left:795.2px;top:365.4px;width:63.6px;height:18.3px"></div>
<div class="t" style="left:795.2px;width:63.6px;text-align:center;top:370.7px">Apply</div>
<div class="btn" style="left:795.2px;top:391.7px;width:63.6px;height:18.6px"></div>
<div class="t" style="left:795.2px;width:63.6px;text-align:center;top:397.2px">Disable</div>
<div class="btn" style="left:795.2px;top:413.5px;width:63.6px;height:18.3px"></div>
<div class="t" style="left:795.2px;width:63.6px;text-align:center;top:418.8px">Comment</div>
<div class="btn" style="left:795.2px;top:435px;width:63.6px;height:15.0px"></div>
<div class="a" style="left:640.3px;top:509.4px;width:222.5px;height:15.6px;background:#d4d0c8;border-top:1px solid #808080;border-left:1px solid #808080;border-right:1px solid #fff;border-bottom:1px solid #fff"></div>
<div class="t" style="left:641px;top:513.5px;color:#a4a19c">disabled</div>
<div class="win" style="left:659px;top:438.2px;width:200.7px;height:71.5px"></div>
<div class="a" style="left:661.9px;top:440.9px;width:193.5px;height:15.7px;background:linear-gradient(90deg,#0a246a,#a6caf0)"></div>
<div class="t" style="left:663.2px;top:444.6px;font-weight:bold;font-size:9.4px;letter-spacing:0.45px;color:#fff">User &lt;freenetis&gt; Password</div>
<div class="cb" style="left:841.7px;top:442.9px;width:13px;height:10.5px"></div>
<svg style="left:844.2px;top:444.45px" width="7.2" height="6.8" viewBox="0 0 7.2 6.8"><path d="M0.6 0.6L6.6 6.2M6.6 0.6L0.6 6.2" stroke="#000" stroke-width="1.55" stroke-linecap="round"/></svg>
<div class="t" style="left:679.7px;top:465.8px">New Password:</div>
<div class="t" style="left:666px;top:486.8px">Confirm Password:</div>
<div class="inp" style="left:746.6px;top:461.4px;width:46px;height:15.2px"></div>
<div class="inp" style="left:746.6px;top:482.3px;width:46px;height:15px"></div>
<svg style="left:748px;top:464.5px" width="42" height="6" viewBox="0 0 42 6"><path d="M3.20 0.50V5.50M1.00 1.70L5.40 4.30M1.00 4.30L5.40 1.70M8.20 0.50V5.50M6.00 1.70L10.40 4.30M6.00 4.30L10.40 1.70M13.20 0.50V5.50M11.00 1.70L15.40 4.30M11.00 4.30L15.40 1.70M18.20 0.50V5.50M16.00 1.70L20.40 4.30M16.00 4.30L20.40 1.70M23.20 0.50V5.50M21.00 1.70L25.40 4.30M21.00 4.30L25.40 1.70M28.20 0.50V5.50M26.00 1.70L30.40 4.30M26.00 4.30L30.40 1.70M33.20 0.50V5.50M31.00 1.70L35.40 4.30M31.00 4.30L35.40 1.70M38.20 0.50V5.50M36.00 1.70L40.40 4.30M36.00 4.30L40.40 1.70" stroke="#000" stroke-width="0.75"/></svg>
<svg style="left:748px;top:485.5px" width="42" height="6" viewBox="0 0 42 6"><path d="M3.20 0.50V5.50M1.00 1.70L5.40 4.30M1.00 4.30L5.40 1.70M8.20 0.50V5.50M6.00 1.70L10.40 4.30M6.00 4.30L10.40 1.70M13.20 0.50V5.50M11.00 1.70L15.40 4.30M11.00 4.30L15.40 1.70M18.20 0.50V5.50M16.00 1.70L20.40 4.30M16.00 4.30L20.40 1.70M23.20 0.50V5.50M21.00 1.70L25.40 4.30M21.00 4.30L25.40 1.70M28.20 0.50V5.50M26.00 1.70L30.40 4.30M26.00 4.30L30.40 1.70M33.20 0.50V5.50M31.00 1.70L35.40 4.30M31.00 4.30L35.40 1.70M38.20 0.50V5.50M36.00 1.70L40.40 4.30M36.00 4.30L40.40 1.70" stroke="#000" stroke-width="0.75"/></svg>
<div class="btn bdef" style="left:802.3px;top:461.4px;width:49.2px;height:19.5px"></div>
<div class="t" style="left:802.3px;width:49.2px;text-align:center;top:467.3px">OK</div>
<div class="btn" style="left:802.3px;top:483.1px;width:49.2px;height:18.9px"></div>
<div class="t" style="left:802.3px;width:49.2px;text-align:center;top:488.8px">Cancel</div>
<svg style="left:819.8px;top:465.6px" width="11" height="17" viewBox="0 0 11 17"><path d="M0.5 0.5V13.6L3.6 10.6L6.0 15.9L8.1 15.0L5.8 9.9H10.1Z" fill="#fff" stroke="#000" stroke-width="0.95" stroke-linejoin="miter"/></svg>
</body></html>
